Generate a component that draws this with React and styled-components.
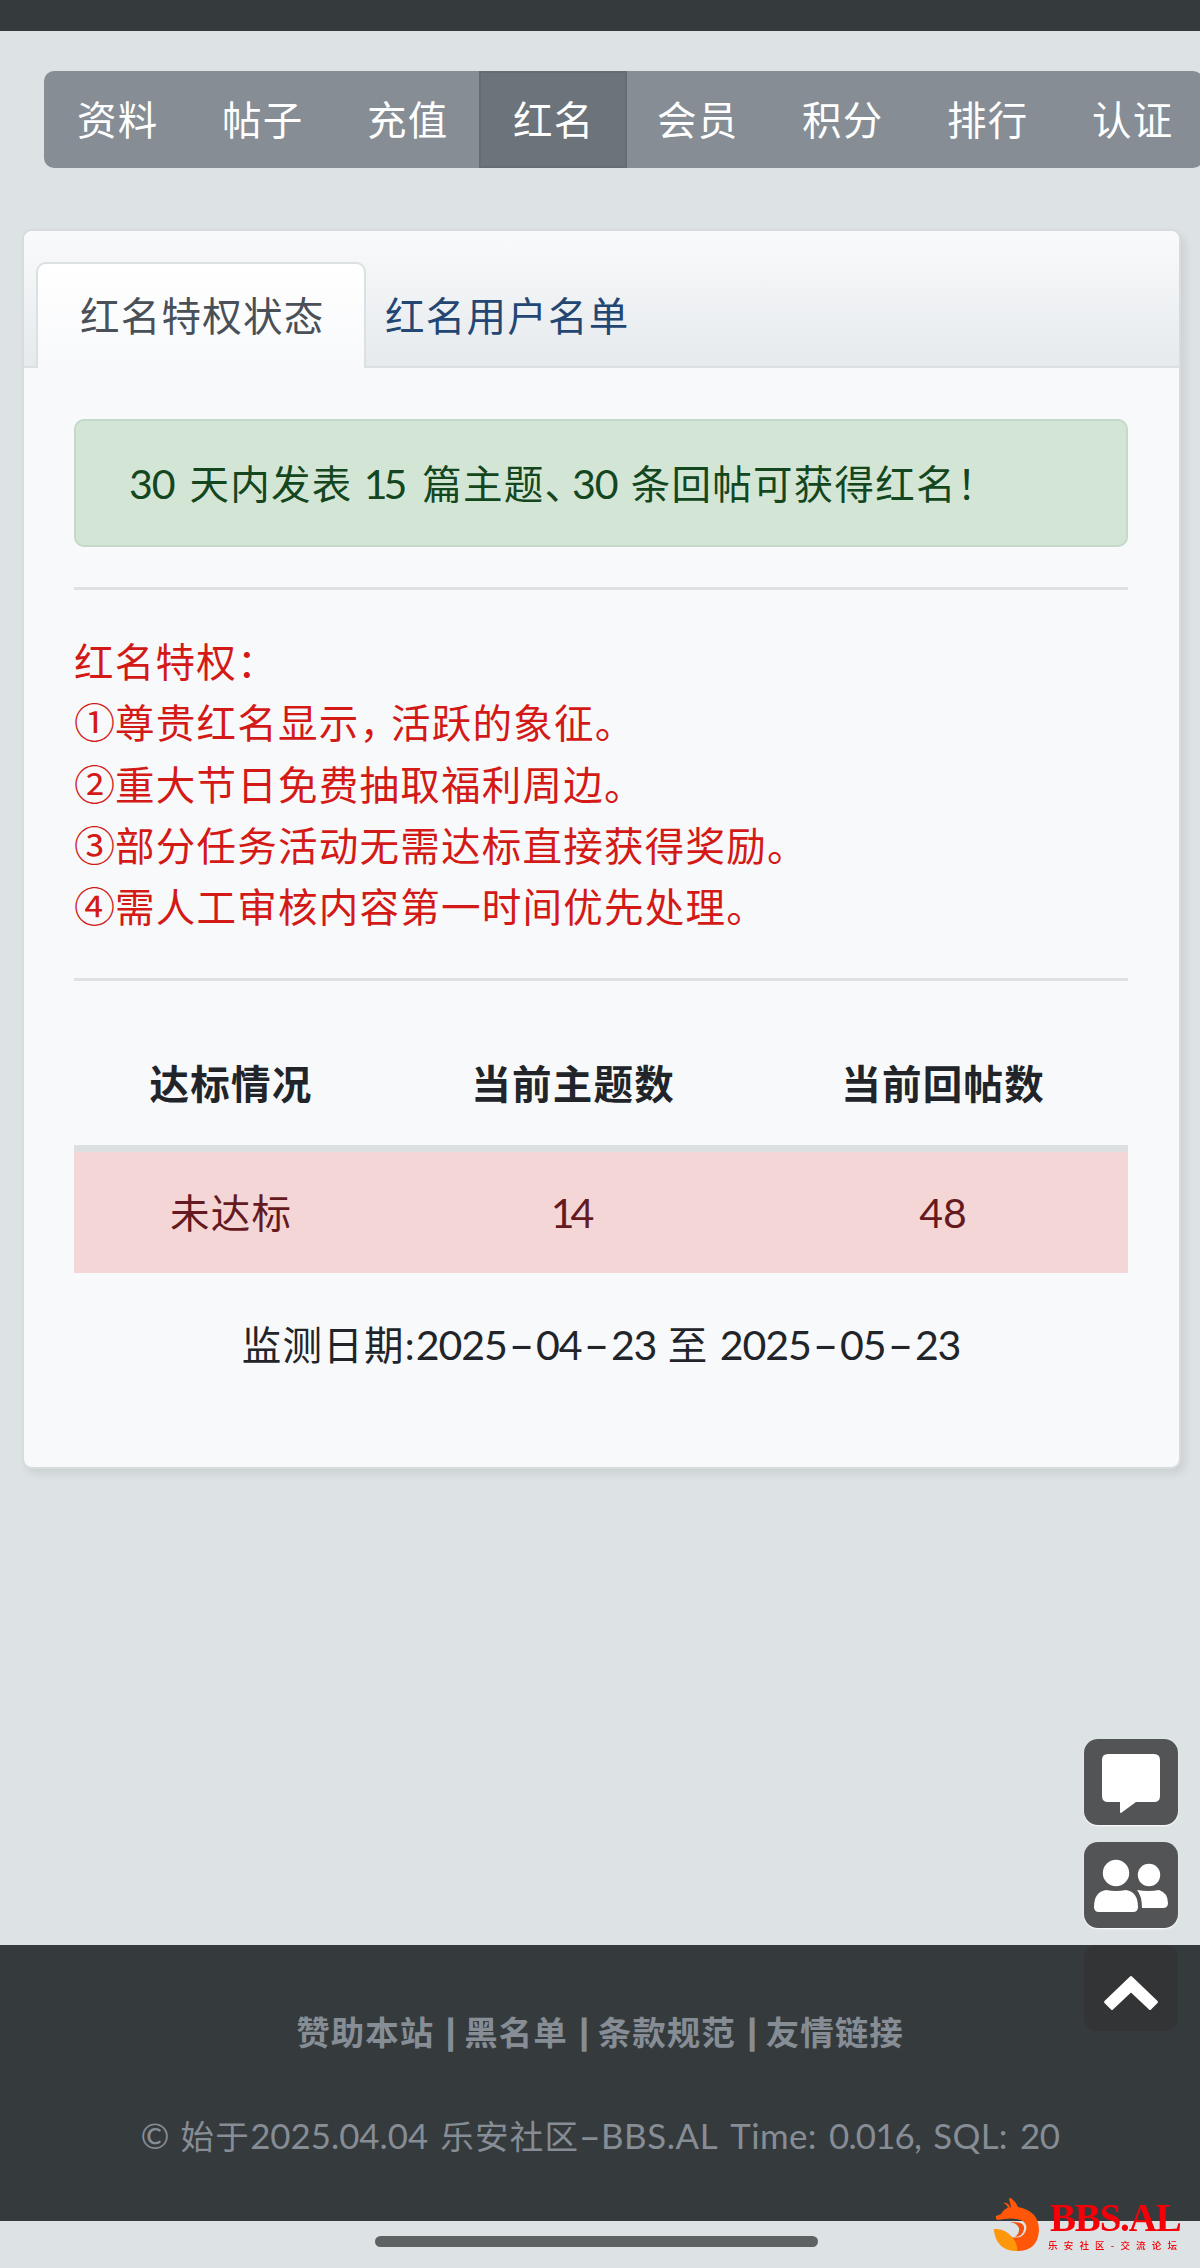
import styled, { createGlobalStyle } from 'styled-components';

const GlobalStyle = createGlobalStyle`
  * {
    box-sizing: border-box;
  }
  body {
    margin: 0;
    background-color: #dde2e4;
    color: #212529;
    font-family: Lato, 'Noto Sans CJK SC', sans-serif;
    font-size: 39.5px;
    line-height: 61.3px;
    letter-spacing: 1.25px;
    overflow: hidden;
  }
`;

const Page = styled.div`
  height: 2268px;
  display: flex;
  flex-direction: column;
  overflow: hidden;
`;

const TopBar = styled.header`
  height: 31px;
  flex-shrink: 0;
  background-color: #353a3d;
`;

const Nav = styled.nav`
  display: flex;
  flex-shrink: 0;
  width: 1159px;
  height: 97px;
  margin: 40px 0 0 44px;
  border-radius: 10px;
  background-color: #868d95;
  overflow: hidden;
`;

const NavItem = styled.a`
  flex: 0 0 145px;
  display: flex;
  align-items: center;
  padding-left: 33px;
  color: #fff;
  ${({ $active }) =>
    $active &&
    `
    flex-basis: 148px;
    margin-right: -3px;
    background-color: #6c737b;
    border: 2px solid #656c74;
    padding-left: 32px;
  `}
`;

const Card = styled.main`
  flex-shrink: 0;
  width: 1159px;
  height: 1240px;
  margin: 61px 0 0 22px;
  border: 2px solid #d7dbdd;
  border-radius: 10px;
  background-color: #f8f9fb;
  box-shadow: 4px 5px 9px rgba(0, 0, 0, 0.08);
`;

const Tabs = styled.div`
  display: flex;
  height: 137px;
  padding: 31px 0 0 12px;
  border-bottom: 2px solid #dbe0e2;
  border-radius: 8px 8px 0 0;
  background: linear-gradient(#f9fafb, #e6eaed);
`;

const Tab = styled.a`
  height: 106px;
  padding: 23px 0 0 19px;
  color: #234672;
  ${({ $active }) =>
    $active &&
    `
    width: 330px;
    padding: 21px 0 0 42px;
    border: 2px solid #dbe0e2;
    border-bottom: none;
    border-radius: 10px 10px 0 0;
    background: linear-gradient(#fff, #f8f9fb);
    color: #495057;
  `}
`;

const CardBody = styled.div`
  padding: 51px 51px 0 50px;
`;

const Alert = styled.div`
  height: 128px;
  padding: 32px 0 0 53px;
  border: 2px solid #c5d8c9;
  border-radius: 10px;
  background-color: #d3e6d6;
  color: #144620;
  white-space: nowrap;
`;

const Divider = styled.hr`
  height: 3px;
  margin: 40px 0 41px;
  border: none;
  background-color: #dfe2e4;
`;

const Perks = styled.div`
  height: 307px;
  color: #d31a16;
  white-space: nowrap;
`;

// pulls the next glyph closer, full-width punctuation is too loose here
const Mark = styled.span`
  letter-spacing: ${({ $gap }) => $gap}px;
`;

// numbers and latin words run a bit larger and tighter than the hanzi
const Num = styled.span`
  margin-right: ${({ $after = 0 }) => $after}px;
  font-size: 1.04em;
  line-height: 1;
  letter-spacing: ${({ $gap = -1.1 }) => $gap}px;
`;

const Circled = styled.span`
  font-family: 'Noto Sans CJK SC', sans-serif;
  font-size: 1.04em;
  line-height: 1;
  letter-spacing: 0;
`;

const Dash = styled.span`
  display: inline-block;
  width: ${({ $width = 0.715 }) => $width}em;
  line-height: 1;
  letter-spacing: 0;
  text-align: center;
  transform: translateY(0.01em) scaleX(1.75);
`;

const Table = styled.table`
  width: 100%;
  border-collapse: collapse;
  table-layout: fixed;
  text-align: center;
`;

const Th = styled.th`
  width: ${({ $width }) => $width}px;
  height: 126px;
  padding: 0;
  border-bottom: 7px solid #dce0e1;
  font-weight: 700;
`;

const Td = styled.td`
  height: 125px;
  padding: 0;
  background-color: #f4d6d7;
  color: #651920;
`;

const Period = styled.p`
  margin: 41px 0 0;
  text-align: center;
  white-space: nowrap;
`;

const Footer = styled.footer`
  flex-shrink: 0;
  height: 276px;
  margin-top: 476px;
  padding-top: 57px;
  background-color: #353a3d;
  color: #868d95;
  font-size: 33.5px;
  text-align: center;
  white-space: nowrap;
`;

const FooterLinks = styled.div`
  display: flex;
  justify-content: center;
  gap: 12px;
  font-weight: 700;
  letter-spacing: 1px;
`;

const Pipe = styled.i`
  width: 6px;
  font-style: normal;
  letter-spacing: 0;
  -webkit-text-stroke: 1.6px #868d95;
`;

const Copyright = styled.p`
  margin: 43px 0 0;
  word-spacing: 2.3px;
`;

const HomeIndicator = styled.div`
  flex-shrink: 0;
  width: 443px;
  height: 11px;
  margin: 15px 0 0 375px;
  border-radius: 6px;
  background-color: #5f6263;
`;

const FloatTools = styled.div`
  position: fixed;
  top: 1739px;
  right: 22px;
  display: flex;
  flex-direction: column;
  gap: 17px;
`;

const ToolButton = styled.button`
  width: 94px;
  height: 86px;
  padding: 0;
  border: none;
  border-radius: 14px;
  background-color: ${({ $dark }) => ($dark ? '#333435' : '#535455')};
  box-shadow: ${({ $dark }) => ($dark ? 'none' : '0 1px 2px #fff')};

  svg {
    display: block;
    fill: #fff;
  }
`;

const Watermark = styled.div`
  position: fixed;
  top: 2194px;
  left: 990px;
  display: flex;
  color: #f50008;
`;

const Brand = styled.div`
  margin: 4px 0 0 8px;
  white-space: nowrap;
`;

const BrandName = styled.div`
  font: 700 39px/40px 'Liberation Serif', serif;
  letter-spacing: -1.2px;
`;

const BrandSub = styled.div`
  margin-left: -2px;
  font: 500 9.5px/14px 'Noto Sans CJK SC', sans-serif;
  letter-spacing: 6.2px;
`;

const navItems = ['资料', '帖子', '充值', '红名', '会员', '积分', '排行', '认证'];
const footerLinks = ['赞助本站', '黑名单', '条款规范', '友情链接'];

const DateText = ({ value }) => (
  <Num>
    {value.split('-').map((part, i) => [i > 0 && <Dash key={i}>-</Dash>, part])}
  </Num>
);

const ChatIcon = () => (
  <svg width="94" height="86">
    <path d="M24 15h46q6 0 6 6v36q0 6-6 6H52L37 74q-1 0-1-1V63H24q-6 0-6-6V21q0-6 6-6z" />
  </svg>
);

const UsersIcon = () => (
  <svg width="94" height="86">
    <circle cx="32" cy="31" r="13.2" />
    <circle cx="65" cy="33" r="11.2" />
    <path d="M22 48q10 2 20 0 12 2 12 17 0 5-5 5H15q-5 0-5-5 0-15 12-17z" />
    <path d="M53 48q12 2 22 0 9 3 9 13 0 5-5 5H58q0-12-5-18z" />
  </svg>
);

const UpIcon = () => (
  <svg width="94" height="86">
    <path d="M46 31.500q1-1 2 0L73.500 56q1 1 0 2L67 64.500q-1 1-2 0L47 47.500 29 64.500q-1 1-2 0L20.500 58q-1-1 0-2z" />
  </svg>
);

const FoxLogo = () => (
  <svg width="52" height="60">
    <path
      d="M6 22q3-1 5-2 3-6 10-7L19 5q1-2 3 0 4 3 6 8 21 4 21 23-1 21-22 21-1-8-5-14 8 2 12-3 6-9-3-14-10-3-23 0-3-1-2-4z"
      fill="#ff5608"
    />
    <path d="M20 28q15-1 14 7-1 7-9 8 5-4 4-9-2-5-9-6z" fill="#f5500c" />
    <path d="M13 9q5-1 7 4l-2 1q-1-4-5-5z" fill="#ff5608" />
    <path d="M3.700 35q11-1 18.300 8 6 7 5 14-21 0-23.300-22z" fill="#ff970b" />
  </svg>
);

export default function App() {
  return (
    <>
      <GlobalStyle />
      <Page>
        <TopBar />
        <Nav>
          {navItems.map((item) => (
            <NavItem key={item} $active={item === '红名'}>
              {item}
            </NavItem>
          ))}
        </Nav>

        <Card>
          <Tabs>
            <Tab $active>红名特权状态</Tab>
            <Tab>红名用户名单</Tab>
          </Tabs>
          <CardBody>
            <Alert>
              <Num $after={5.5}>30 </Num>天内发表 <Num $gap={-4}>1</Num>
              <Num $after={6.5}>5 </Num>篇主题<Mark $gap={-12}>、</Mark>
              <Num $after={4}>30 </Num>条回帖可获得红名！
            </Alert>
            <Divider />
            <Perks>
              红名特权：
              <br />
              <Circled>①</Circled>尊贵红名显示<Mark $gap={-8}>，</Mark>活跃的象征。
              <br />
              <Circled>②</Circled>重大节日免费抽取福利周边。
              <br />
              <Circled>③</Circled>部分任务活动无需达标直接获得奖励。
              <br />
              <Circled>④</Circled>需人工审核内容第一时间优先处理。
            </Perks>
            <Divider />
            <Table>
              <thead>
                <tr>
                  <Th $width={314}>达标情况</Th>
                  <Th $width={370}>当前主题数</Th>
                  <Th $width={370}>当前回帖数</Th>
                </tr>
              </thead>
              <tbody>
                <tr>
                  <Td>未达标</Td>
                  <Td>
                    <Num $gap={-4} $after={5}>14</Num>
                  </Td>
                  <Td>
                    <Num $gap={0}>48</Num>
                  </Td>
                </tr>
              </tbody>
            </Table>
            <Period>
              监测日期:
              <DateText value="2025-04-23" /> 至 <DateText value="2025-05-23" />
            </Period>
          </CardBody>
        </Card>

        <Footer>
          <FooterLinks>
            {footerLinks.map((link, i) => [
              i > 0 && <Pipe key={i}>|</Pipe>,
              <span key={link}>{link}</span>,
            ])}
          </FooterLinks>
          <Copyright>
            <Num>©</Num> 始于<Num $gap={0}>2025.04.04</Num> 乐安社区
            <Num $gap={0.6}>
              <Dash $width={0.62}>-</Dash>BBS.AL
            </Num>{' '}
            <Num $gap={0.4}>Time:</Num> <Num $gap={-0.8}>0.016,</Num>{' '}
            <Num $gap={0.3}>SQL:</Num> <Num $gap={-0.5}>20</Num>
          </Copyright>
        </Footer>
        <HomeIndicator />
      </Page>

      <FloatTools>
        <ToolButton>
          <ChatIcon />
        </ToolButton>
        <ToolButton>
          <UsersIcon />
        </ToolButton>
        <ToolButton $dark>
          <UpIcon />
        </ToolButton>
      </FloatTools>

      <Watermark>
        <FoxLogo />
        <Brand>
          <BrandName>BBS.AL</BrandName>
          <BrandSub>乐安社区-交流论坛</BrandSub>
        </Brand>
      </Watermark>
    </>
  );
}
